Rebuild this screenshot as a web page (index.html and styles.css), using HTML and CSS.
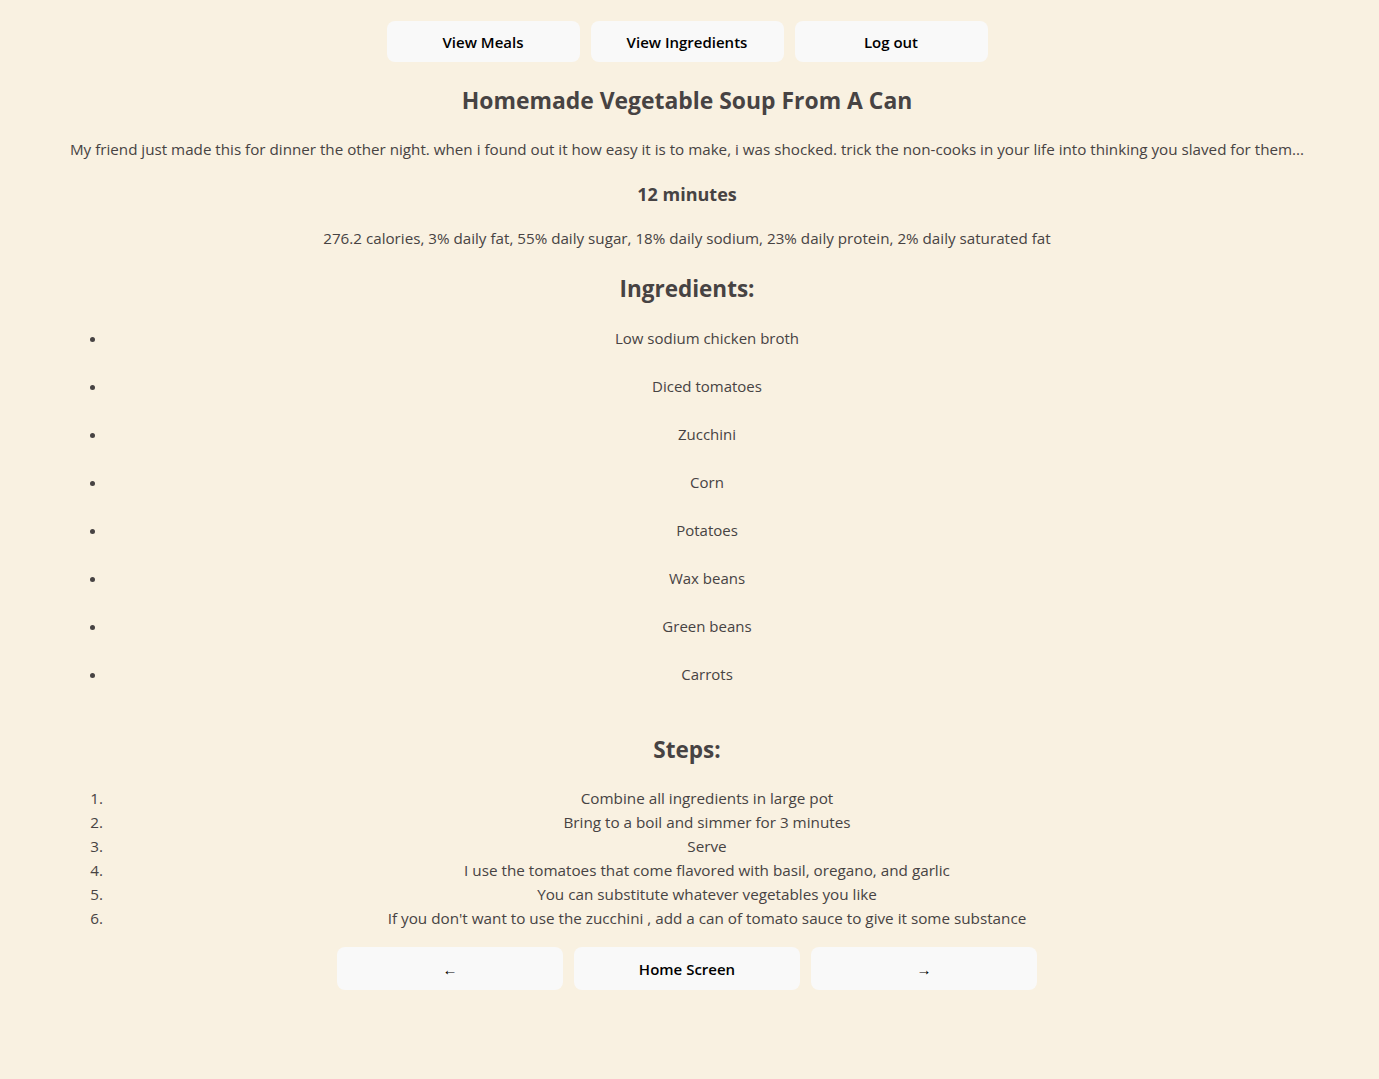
FILE: index.html
```html
<!DOCTYPE html>
<html>
<head>
<meta charset="utf-8">
<link rel="stylesheet" href="styles.css">
</head>
<body>
<div class="page">
  <nav class="topnav">
    <button class="btn top">View Meals</button>
    <button class="btn top">View Ingredients</button>
    <button class="btn top">Log out</button>
  </nav>
  <h1 class="title">Homemade Vegetable Soup From A Can</h1>
  <p class="desc">My friend just made this for dinner the other night. when i found out it how easy it is to make, i was shocked. trick the non-cooks in your life into thinking you slaved for them...</p>
  <h3 class="time">12 minutes</h3>
  <p class="nutr">276.2 calories, 3% daily fat, 55% daily sugar, 18% daily sodium, 23% daily protein, 2% daily saturated fat</p>
  <h2 class="section ing-head">Ingredients:</h2>
  <ul class="ing">
    <li>Low sodium chicken broth</li>
    <li>Diced tomatoes</li>
    <li>Zucchini</li>
    <li>Corn</li>
    <li>Potatoes</li>
    <li>Wax beans</li>
    <li>Green beans</li>
    <li>Carrots</li>
  </ul>
  <h2 class="section steps-head">Steps:</h2>
  <ol class="steps">
    <li>Combine all ingredients in large pot</li>
    <li>Bring to a boil and simmer for 3 minutes</li>
    <li>Serve</li>
    <li>I use the tomatoes that come flavored with basil, oregano, and garlic</li>
    <li>You can substitute whatever vegetables you like</li>
    <li>If you don't want to use the zucchini , add a can of tomato sauce to give it some substance</li>
  </ol>
  <nav class="bottomnav">
    <button class="btn bottom">&larr;</button>
    <button class="btn bottom">Home Screen</button>
    <button class="btn bottom">&rarr;</button>
  </nav>
</div>
</body>
</html>
```

FILE: styles.css
```css
html, body {
  margin: 0;
  padding: 0;
  background: #f9f1e1;
}
body {
  font-family: "Open Sans", "Noto Sans", sans-serif;
  color: #474343;
  padding-right: 5px;
}
.page {
  width: 1240px;
  margin: 0 auto;
  text-align: center;
}
.topnav {
  display: flex;
  justify-content: center;
  gap: 11px;
  padding-top: 21px;
}
.btn {
  background: #f9f9f9;
  border: none;
  border-radius: 8px;
  font-family: inherit;
  font-weight: 600;
  color: #000;
  cursor: pointer;
}
.btn.top {
  width: 193px;
  height: 41px;
  font-size: 15px;
}
.title {
  font-size: 22.9px;
  line-height: 32px;
  font-weight: 700;
  margin: 23px 0 0;
}
.desc {
  font-size: 15.2px;
  line-height: 24px;
  margin: 20px 0 0;
}
.time {
  font-size: 18px;
  line-height: 24px;
  font-weight: 700;
  margin: 21px 0 0;
}
.nutr {
  font-size: 15.2px;
  line-height: 22px;
  margin: 21px 0 0;
}
.section {
  font-size: 22.5px;
  line-height: 32px;
  font-weight: 700;
  margin: 0;
}
.ing-head { margin-top: 24px; }
.ing {
  margin: 21px 0 0 2px;
  padding-left: 38px;
}
.ing li {
  font-size: 15px;
  line-height: 24px;
  margin-top: 24px;
}
.ing li:first-child { margin-top: 0; }
.steps-head { margin-top: 48px; }
.steps {
  margin: 20px 0 0 2px;
  padding-left: 38px;
}
.steps li {
  font-size: 15.25px;
  line-height: 24px;
}
.bottomnav {
  display: flex;
  justify-content: center;
  gap: 11px;
  margin-top: 17px;
}
.btn.bottom {
  width: 226px;
  height: 43px;
  font-size: 15px;
}
```
